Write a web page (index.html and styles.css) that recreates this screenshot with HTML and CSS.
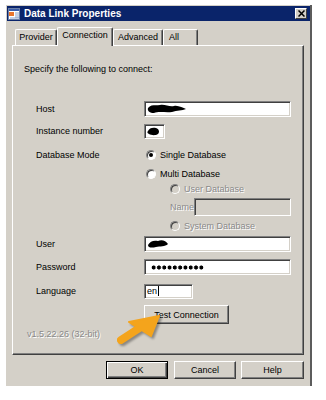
FILE: index.html
```html
<!DOCTYPE html>
<html lang="en">
<head>
  <meta charset="UTF-8" />
  <meta name="viewport" content="width=device-width, initial-scale=1.0"/>
  <title>Data Link Properties</title>
  <link rel="stylesheet" href="styles.css">
</head>
<body>
  <div class="window">
    <div class="titlebar">
      <svg class="appicon" width="12" height="12" viewBox="0 0 12 12">
        <rect x="0.5" y="0.5" width="11" height="11" fill="#fff" stroke="#6b7fa8"/>
        <rect x="1" y="1" width="10" height="2" fill="#3a5ca8"/>
        <rect x="1" y="4" width="5" height="4" fill="#e8742c"/>
        <path d="M7 5h4M7 7h4M7 9h4M2 10h9" stroke="#8aa0c8" stroke-width="1"/>
      </svg>
      <span class="title">Data Link Properties</span>
      <div class="close">
        <svg width="7" height="7" viewBox="0 0 7 7"><path d="M0.5 0.5l6 6M6.5 0.5l-6 6" stroke="#000" stroke-width="1.5"/></svg>
      </div>
    </div>

    <div class="tabs">
      <div class="tab provider">Provider</div>
      <div class="tab active">Connection</div>
      <div class="tab advanced">Advanced</div>
      <div class="tab all">All</div>
    </div>

    <div class="panel">
      <p class="intro">Specify the following to connect:</p>

      <div class="form">
        <div class="row r-host">
          <span class="lbl">Host</span>
          <div class="field wide">
            <svg class="blot" width="40" height="10" viewBox="0 0 40 10"><path d="M1 4 C4 0 9 2 13 1 C18 0 22 3 27 2 C31 1 36 4 39 5 C35 7 30 6 25 8 C19 9 12 7 7 9 C3 9 0 7 1 4Z" fill="#000"/></svg>
          </div>
        </div>
        <div class="row r-inst">
          <span class="lbl">Instance number</span>
          <div class="field tiny">
            <svg class="blot" width="13" height="9" viewBox="0 0 13 9"><path d="M1 4 C2 1 6 0 9 1 C12 2 13 5 11 7 C8 9 4 8 2 7 C0 6 0 5 1 4Z" fill="#000"/></svg>
          </div>
        </div>
        <div class="row r-single">
          <span class="lbl">Database Mode</span>
          <span class="radio checked"></span>
          <span>Single Database</span>
        </div>
        <div class="row r-multi">
          <span class="lbl"></span>
          <span class="radio"></span>
          <span>Multi Database</span>
        </div>
        <div class="row r-userdb sub">
          <span class="radio off"></span>
          <span class="dim">User Database</span>
        </div>
        <div class="row r-name sub">
          <span class="dim name-lbl">Name</span>
          <div class="field name off"></div>
        </div>
        <div class="row r-sysdb sub">
          <span class="radio off"></span>
          <span class="dim">System Database</span>
        </div>
        <div class="row r-user">
          <span class="lbl">User</span>
          <div class="field wide">
            <svg class="blot" width="22" height="10" viewBox="0 0 22 10"><path d="M1 6 C3 2 7 1 11 2 C15 0 19 2 21 5 C18 8 13 7 9 8 C5 9 1 9 1 6Z" fill="#000"/></svg>
          </div>
        </div>
        <div class="row r-pass">
          <span class="lbl">Password</span>
          <div class="field wide"><span class="dots"></span></div>
        </div>
        <div class="row r-lang">
          <span class="lbl">Language</span>
          <div class="field lang">en<span class="caret"></span></div>
        </div>
        <div class="row r-test">
          <span class="lbl"></span>
          <button class="btn test">Test Connection</button>
        </div>
      </div>

      <p class="version">v1.5.22.26 (32-bit)</p>
    </div>

    <div class="actions">
      <button class="btn default">OK</button>
      <button class="btn">Cancel</button>
      <button class="btn help">Help</button>
    </div>

    <!-- callout arrow pasted over the screenshot -->
    <svg class="arrow" width="60" height="46" viewBox="0 0 60 46">
      <path d="M11 35 L31 22" stroke="#f4a41c" stroke-width="8" stroke-linecap="round"/>
      <path d="M49 11 L19 17 L41 31 Z" fill="#f4a41c" stroke="#f4a41c" stroke-width="2" stroke-linejoin="round"/>
    </svg>
  </div>
</body>
</html>
```

FILE: styles.css
```css
body {
  margin: 0;
  background: #fff;
  font-family: "Liberation Sans", Arial, sans-serif;
  font-size: 9px;
  color: #000;
}

.window {
  position: relative;
  box-sizing: border-box;
  margin: 5px 0 0 6px;
  width: 306px;
  height: 381px;
  padding: 1px 0 0 1px;
  background: #d4d0c8;
  border-right: 2px solid #5c5c5c;
}

.titlebar {
  display: flex;
  align-items: center;
  height: 15px;
  padding: 0 3px 0 1px;
  background: #0a246a;
  color: #fff;
}
.appicon {
  margin-right: 4px;
}
.title {
  font-weight: bold;
  font-size: 10px;
}
.close {
  margin-left: auto;
  width: 12px;
  height: 11px;
  display: flex;
  align-items: center;
  justify-content: center;
  background: #d4d0c8;
  border: 1px solid;
  border-color: #fff #404040 #404040 #fff;
  box-sizing: border-box;
}

.tabs {
  display: flex;
  align-items: flex-end;
  height: 18px;
  margin: 6px 0 0 8px;
}
.tab {
  box-sizing: border-box;
  height: 16px;
  line-height: 14px;
  text-align: center;
  border: 1px solid;
  border-bottom: none;
  border-color: #fff #404040 #fff #fff;
  border-radius: 2px 2px 0 0;
  box-shadow: inset -1px 0 #808080;
}
.provider { width: 42px; }
.advanced { width: 50px; }
.all { width: 35px; text-align: left; padding-left: 5px; }
.tab.active {
  position: relative;
  z-index: 1;
  width: 56px;
  height: 19px;
  margin-bottom: -1px;
  line-height: 15px;
  background: #d4d0c8;
}

.panel {
  box-sizing: border-box;
  width: 292px;
  height: 310px;
  margin-left: 5px;
  padding: 17px 0 0 11px;
  border: 1px solid;
  border-color: #fff #404040 #404040 #fff;
  box-shadow: inset -1px -1px #808080;
}
.intro {
  margin: 0;
  line-height: 12px;
}

.form {
  margin: 26px 0 0 12px;
}
.row {
  display: flex;
  align-items: center;
  height: 16px;
}
.lbl {
  width: 108px;
  flex: none;
}
.r-inst { margin-top: 6px; }
.r-single { margin-top: 8px; height: 15px; }
.r-multi { margin-top: 4px; height: 15px; }
.r-userdb { height: 15px; }
.r-name { margin-top: 2px; height: 18px; }
.r-sysdb { margin-top: 2px; height: 15px; }
.r-user { margin-top: 3px; }
.r-pass { margin-top: 7px; }
.r-lang { margin-top: 8px; }
.r-test { margin-top: 6px; height: 19px; }
.sub { padding-left: 134px; }

.field {
  box-sizing: border-box;
  height: 16px;
  display: flex;
  align-items: center;
  padding-left: 2px;
  background: #fff;
  border: 1px solid;
  border-color: #808080 #fff #fff #808080;
  box-shadow: inset 1px 1px #404040, inset -1px -1px #d4d0c8;
}
.wide { width: 147px; }
.tiny { width: 21px; height: 15px; }
.lang { width: 49px; height: 15px; }
.name { width: 97px; height: 18px; margin-left: 3px; }
.field.off { background: #d4d0c8; }

.caret {
  width: 1px;
  height: 10px;
  margin-left: 1px;
  background: #000;
}
.dots {
  display: block;
  width: 53px;
  height: 5px;
  margin-left: 4px;
  background: radial-gradient(circle, #000 1.8px, transparent 2.3px) 0 0 / 5.3px 5px repeat-x;
}

.radio {
  box-sizing: border-box;
  width: 10px;
  height: 10px;
  margin: 0 4px 0 2px;
  border-radius: 50%;
  background: #fff;
  border: 1px solid;
  border-color: #808080 #fff #fff #808080;
  box-shadow: inset 1px 1px #404040;
  display: flex;
  align-items: center;
  justify-content: center;
}
.radio.checked::after {
  content: "";
  width: 4px;
  height: 4px;
  border-radius: 50%;
  background: #000;
}
.radio.off { background: #d4d0c8; }
.dim {
  color: #8a8a8a;
  text-shadow: 1px 1px 0 #fff;
}
.name-lbl {
  width: 21px;
  margin-left: 0;
}
.r-userdb, .r-sysdb { padding-left: 132px; }

.btn {
  box-sizing: border-box;
  height: 18px;
  padding: 0;
  font: inherit;
  color: #000;
  background: #d4d0c8;
  border: 1px solid;
  border-color: #fff #404040 #404040 #fff;
  box-shadow: inset -1px -1px #808080;
}
.test { width: 85px; height: 19px; }

.version {
  margin: 4px 0 0 3px;
  line-height: 12px;
  color: #8a8a8a;
  text-shadow: 1px 1px 0 #fff;
}

.actions {
  display: flex;
  justify-content: flex-end;
  gap: 6px;
  margin-top: 6px;
  padding-right: 6px;
}
.actions .btn { width: 62px; }
.actions .help { width: 63px; margin-left: -1px; }
.btn.default {
  border-color: #000;
  box-shadow: inset 1px 1px #fff, inset -1px -1px #404040, inset -2px -2px #808080;
}

.arrow {
  position: absolute;
  left: 104px;
  top: 300px;
  filter: drop-shadow(2px 2px 1px rgba(0, 0, 0, 0.35));
}
```
